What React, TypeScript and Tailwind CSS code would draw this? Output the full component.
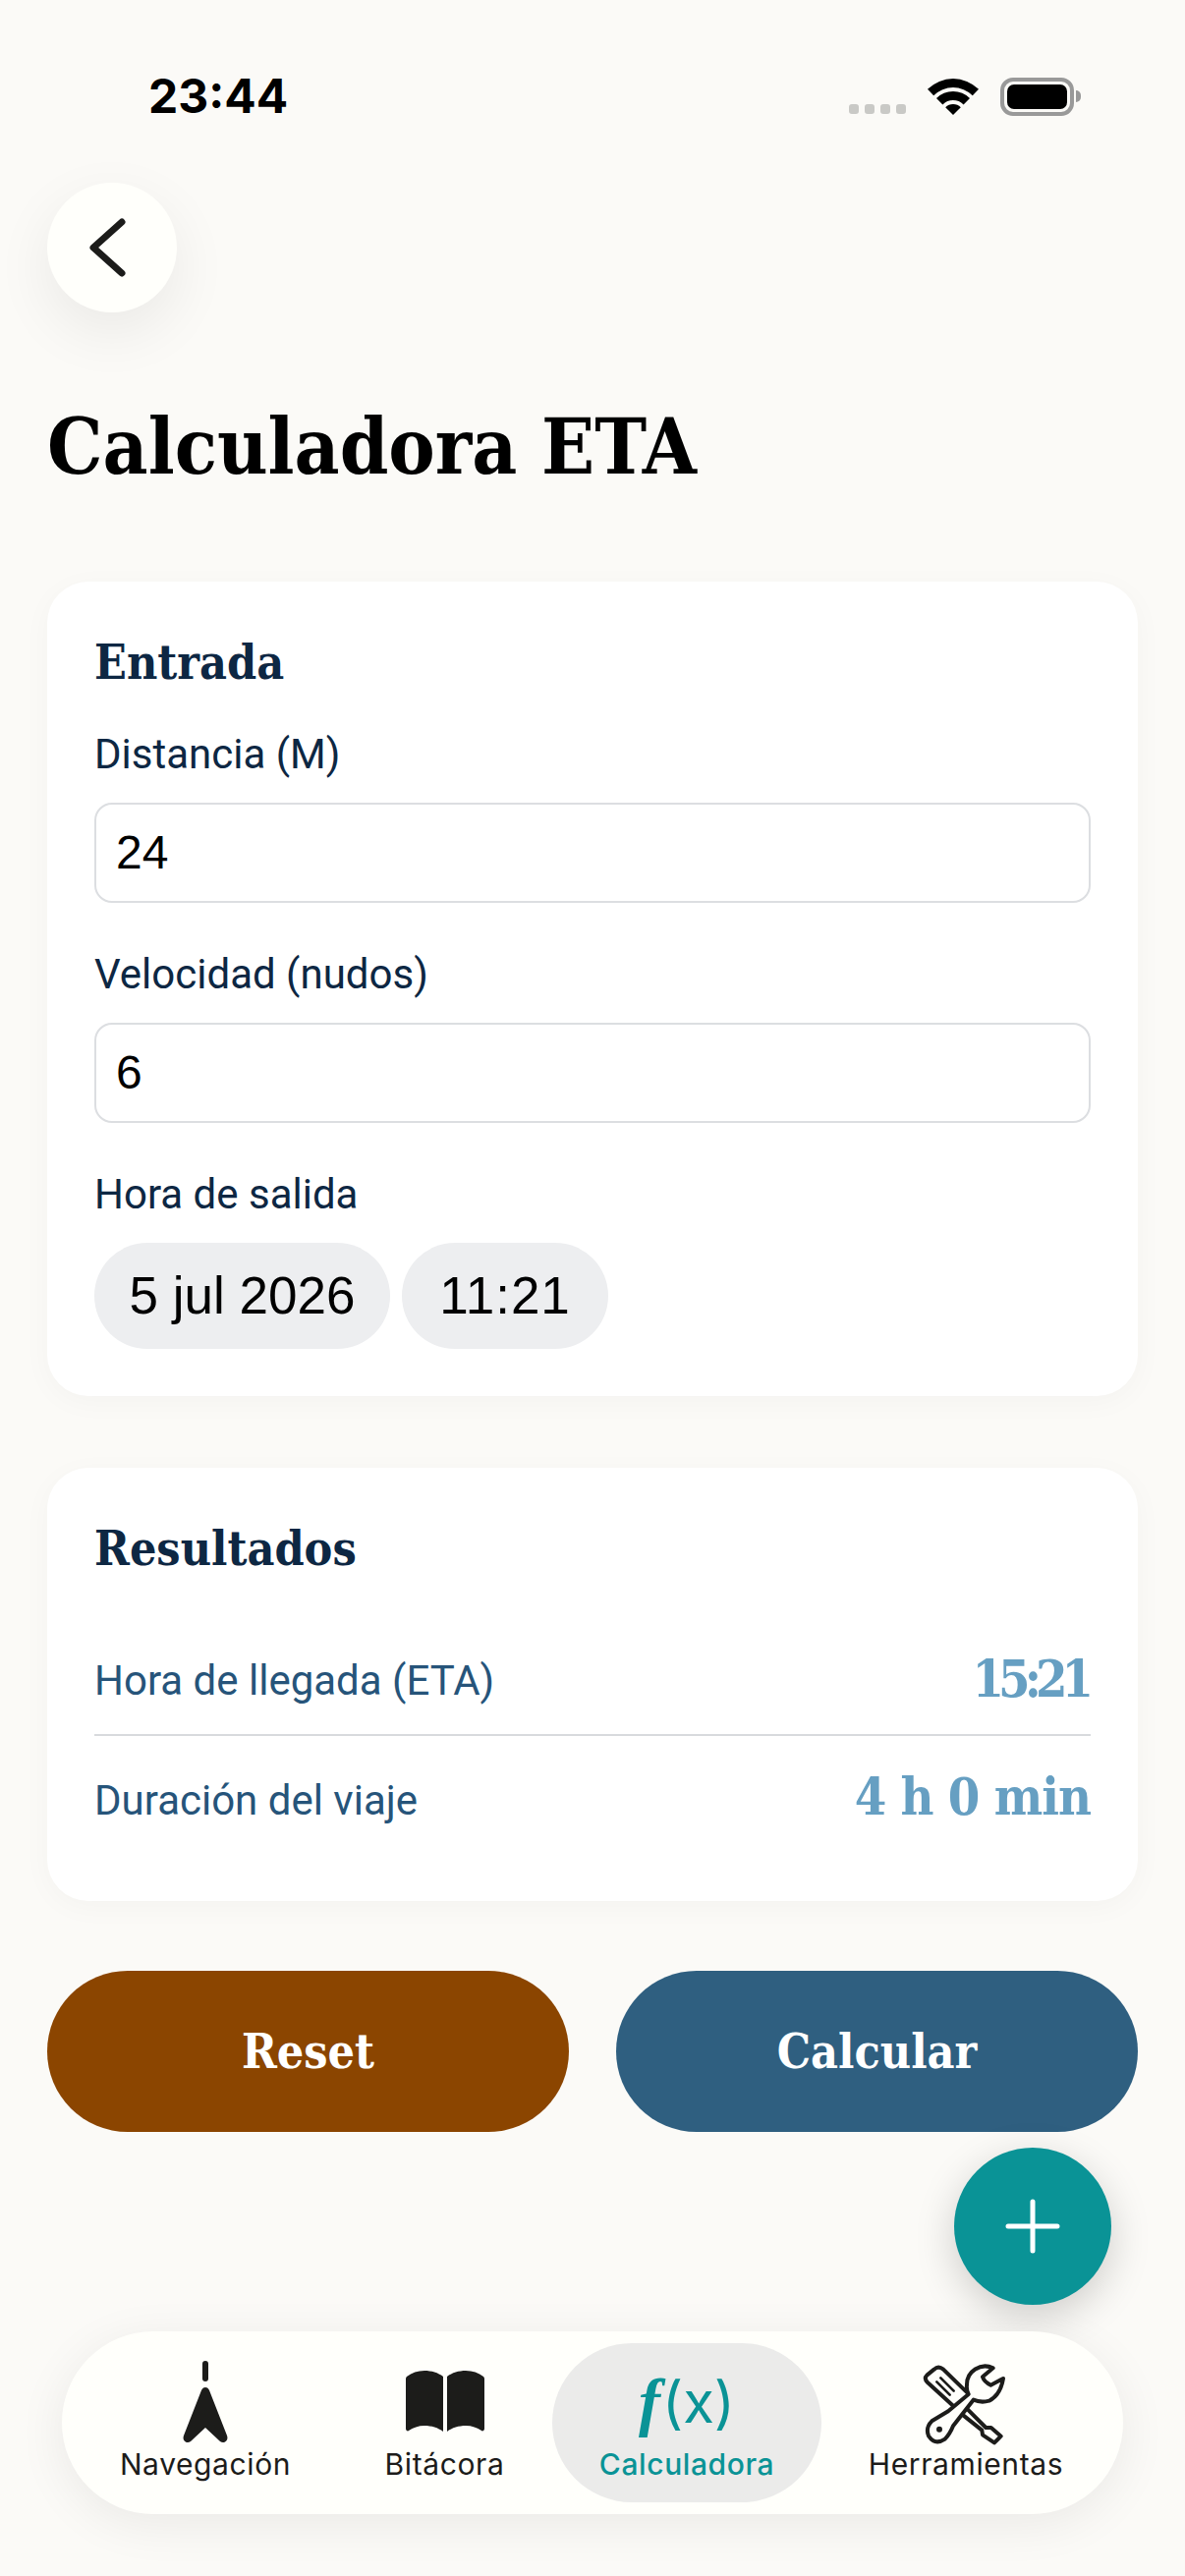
const slab = 'font-["DejaVu_Serif_Condensed","DejaVu_Serif",serif]';

function Field({label, value}: {label: string; value: string}) {
    return (
        <div className="mb-[49px]">
            <div className="text-[42px] leading-[48px] text-[#0d2743] font-['Roboto',sans-serif] mb-[25px]">{label}</div>
            <div className="h-[102px] rounded-[18px] border-2 border-[#dcdee1] bg-white flex items-center px-[20px] text-[48px] text-black font-['Liberation_Sans',sans-serif]">
                {value}
            </div>
        </div>
    );
}

function Tab({label, width, active, children}: {label: string; width: string; active?: boolean; children: React.ReactNode}) {
    return (
        <div className={`${width} h-[162px] flex flex-col items-center rounded-[81px] ${active ? 'bg-[#ebebea]' : ''}`}>
            <div className="h-[105px] w-full flex items-center justify-center">{children}</div>
            <div className={`text-[30px] leading-[36px] tracking-[0.6px] font-['Inter',sans-serif] ${active ? 'text-[#0a9396] font-medium' : 'text-[#1c1c1a]'}`}>
                {label}
            </div>
        </div>
    );
}

export default function App() {
    return (
        <div className="relative w-[1206px] h-[2622px] bg-[#fbfaf7] overflow-hidden">
            <div className="h-[186px] pt-[68px] pl-[151px] flex justify-between pr-[106px]">
                <div className="text-[48px] leading-[60px] font-bold text-black font-['Inter',sans-serif]">23:44</div>
                <div className="flex items-center h-[60px] gap-[22px]">
                    <div className="flex gap-[6px] mt-[26px]">
                        <span className="w-[10px] h-[10px] rounded-[3px] bg-[#c9c9c6]" />
                        <span className="w-[10px] h-[10px] rounded-[3px] bg-[#c9c9c6]" />
                        <span className="w-[10px] h-[10px] rounded-[3px] bg-[#c9c9c6]" />
                        <span className="w-[10px] h-[10px] rounded-[3px] bg-[#c9c9c6]" />
                    </div>
                    <svg width="52" height="37" viewBox="0 0 52 37" fill="black">
                        <path d="M0 10.8A37 37 0 0 1 52 10.8L45.8 17.2A28 28 0 0 0 6.2 17.2z" />
                        <path d="M9 20A24 24 0 0 1 43 20L36.6 26.4A15 15 0 0 0 15.4 26.4z" />
                        <path d="M18.2 29.2A11 11 0 0 1 33.8 29.2L26 37z" />
                    </svg>
                    <div className="flex items-center">
                        <div className="w-[75px] h-[39px] rounded-[13px] border-[4px] border-[#999] p-[3px]">
                            <div className="w-full h-full rounded-[7px] bg-black" />
                        </div>
                        <div className="w-[5px] h-[12px] bg-[#999] rounded-r-full ml-[2px]" />
                    </div>
                </div>
            </div>

            <div className="px-[48px]">
                <div className="w-[132px] h-[132px] rounded-full bg-[#fffffb] shadow-[0_20px_60px_rgba(0,0,0,0.07)] flex items-center justify-center">
                    <svg width="44" height="64" viewBox="0 0 44 64" fill="none" stroke="#1c1c1a" strokeWidth="7" strokeLinecap="round" strokeLinejoin="round" className="-ml-[10px]">
                        <path d="M37 6 8 32l29 26" />
                    </svg>
                </div>

                <h1 className={`${slab} mt-[92px] text-[79px] leading-[90px] font-bold text-black`}>Calculadora ETA</h1>

                <div className="mt-[92px] h-[829px] rounded-[42px] bg-white px-[48px] pt-[54px] shadow-[0_6px_30px_rgba(0,0,0,0.03)]">
                    <div className={`${slab} text-[48px] leading-[56px] font-bold text-[#0d2743] mb-[42px]`}>Entrada</div>
                    <Field label="Distancia (M)" value="24" />
                    <Field label="Velocidad (nudos)" value="6" />
                    <div className="text-[42px] leading-[48px] text-[#0d2743] font-['Roboto',sans-serif] mb-[25px]">Hora de salida</div>
                    <div className="flex gap-[12px]">
                        <div className="h-[108px] w-[301px] rounded-[54px] bg-[#edeef0] flex items-center justify-center text-[53px] text-black font-['Liberation_Sans',sans-serif]">5 jul 2026</div>
                        <div className="h-[108px] w-[210px] rounded-[54px] bg-[#edeef0] flex items-center justify-center text-[53px] tracking-[1px] text-black font-['Liberation_Sans',sans-serif]">11:21</div>
                    </div>
                </div>

                <div className="mt-[73px] h-[441px] rounded-[42px] bg-white px-[48px] pt-[54px] shadow-[0_6px_30px_rgba(0,0,0,0.03)]">
                    <div className={`${slab} text-[48px] leading-[56px] font-bold text-[#0d2743]`}>Resultados</div>
                    <div className="mt-[51px] h-[112px] flex items-center justify-between border-b-2 border-[#d8dadd]">
                        <span className="text-[42px] text-[#26547a] font-['Roboto',sans-serif]">Hora de llegada (ETA)</span>
                        <span className={`${slab} text-[52px] tracking-[-6px] pr-[3px] pb-[3px] font-bold text-[#669fc2]`}>15:21</span>
                    </div>
                    <div className="h-[130px] flex items-center justify-between">
                        <span className="text-[42px] text-[#26547a] font-['Roboto',sans-serif]">Duración del viaje</span>
                        <span className={`${slab} text-[52px] tracking-[-1px] pb-[6px] font-bold text-[#669fc2]`}>4 h 0 min</span>
                    </div>
                </div>

                <div className="mt-[71px] flex gap-[48px]">
                    <button className={`${slab} flex-1 h-[164px] rounded-[82px] bg-[#8b4500] text-white text-[48px] font-bold`}>Reset</button>
                    <button className={`${slab} flex-1 h-[164px] rounded-[82px] bg-[#2f5f80] text-white text-[48px] font-bold`}>Calcular</button>
                </div>
            </div>

            <div className="absolute left-[971px] top-[2186px] w-[160px] h-[160px] rounded-full bg-[#0a9396] shadow-[0_12px_40px_rgba(0,0,0,0.18)] flex items-center justify-center">
                <svg width="56" height="56" viewBox="0 0 56 56" stroke="white" strokeWidth="5" strokeLinecap="round">
                    <path d="M28 3v50M3 28h50" />
                </svg>
            </div>

            <div className="absolute left-[63px] top-[2373px] w-[1080px] h-[186px] rounded-[93px] bg-[#fffffb] shadow-[0_10px_50px_rgba(0,0,0,0.07)] flex items-center pl-[12px]">
                <Tab label="Navegación" width="w-[268px]">
                    <svg width="48" height="86" viewBox="0 0 48 86" fill="#1c1c1a" className="mt-[16px]">
                        <rect x="21" y="0" width="6" height="21" rx="3" />
                        <path d="M24 27c2 0 3 1 4 3l18 46c2 5-3 9-7 6L24 68 9 82c-4 3-9-1-7-6l18-46c1-2 2-3 4-3z" />
                    </svg>
                </Tab>
                <Tab label="Bitácora" width="w-[219px]">
                    <svg width="80" height="62" viewBox="0 0 80 62" fill="#1c1c1a" className="mt-[12px]">
                        <path d="M38 6C33 2 26 0 19 0 12 0 6 2 1 6c-1 1-1 2-1 3v50c0 2 2 3 3 2 4-3 10-5 16-5 7 0 14 2 19 6z" />
                        <path d="M42 6c5-4 12-6 19-6 7 0 13 2 18 6 1 1 1 2 1 3v50c0 2-2 3-3 2-4-3-10-5-16-5-7 0-14 2-19 6z" />
                    </svg>
                </Tab>
                <Tab label="Calculadora" width="w-[274px]" active>
                    <div className="flex items-center text-[#0a9396] text-[58px] leading-[60px] font-['Inter',sans-serif] mt-[14px]">
                        <span className="italic font-bold text-[66px] font-['Liberation_Serif',serif] mr-[2px]">f</span>
                        <span>(x)</span>
                    </div>
                </Tab>
                <Tab label="Herramientas" width="w-[294px]">
                    <svg width="130" height="110" viewBox="0 0 390 330" fill="none" stroke="#1c1c1a" strokeWidth="12" strokeLinejoin="round" strokeLinecap="round" className="mt-[16px] ml-[4px]">
                        <path d="M92 62Q105 50 120 62L200 140 155 178 72 102Q60 90 70 80z" />
                        <path d="M100 100l40 40M112 88l40 40" strokeWidth="8" />
                        <path d="M195 185 250 240 266 240 296 266 276 286 240 262 238 248 178 200" />
                        <path d="M272 58A56 56 0 0 0 192 110Q190 125 197 138L135 190 85 220Q65 240 75 265 95 295 125 275 140 260 150 235L212 155Q235 165 260 158 295 140 303 90L265 110Q245 100 240 85z" fill="#fffffb" />
                        <circle cx="108" cy="245" r="9" fill="#1c1c1a" stroke="none" />
                    </svg>
                </Tab>
            </div>
        </div>
    );
}
